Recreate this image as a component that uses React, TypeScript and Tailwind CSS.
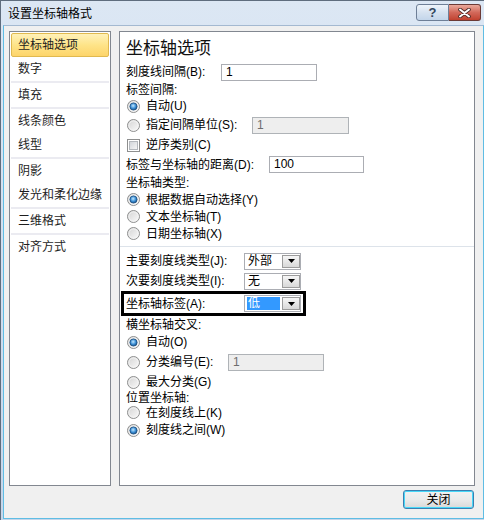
import React from "react";

function Radio({ on }: { on?: boolean }) {
  return (
    <svg width="13" height="13" viewBox="0 0 13 13" className="shrink-0">
      <defs>
        <linearGradient id="rOff" x1="0" y1="0" x2="1" y2="1">
          <stop offset="0" stopColor="#d2d2d2" />
          <stop offset="1" stopColor="#fcfcfc" />
        </linearGradient>
        <radialGradient id="rOn" cx="0.45" cy="0.4" r="0.65">
          <stop offset="0" stopColor="#c2e8ff" />
          <stop offset="0.55" stopColor="#3b8fd6" />
          <stop offset="1" stopColor="#14477a" />
        </radialGradient>
      </defs>
      <circle cx="6.5" cy="6.5" r="6" fill="url(#rOff)" stroke="#8e8f8f" />
      <circle cx="6.5" cy="6.5" r="4.6" fill="none" stroke="#f5f5f5" strokeWidth="0.8" />
      {on && <circle cx="6.5" cy="6.5" r="3.6" fill="url(#rOn)" stroke="#1a4e80" strokeWidth="0.8" />}
    </svg>
  );
}

function Check() {
  return (
    <svg width="13" height="13" viewBox="0 0 13 13" className="shrink-0">
      <defs>
        <linearGradient id="cb" x1="0" y1="0" x2="1" y2="1">
          <stop offset="0" stopColor="#cfd3d8" />
          <stop offset="1" stopColor="#f7f7f7" />
        </linearGradient>
      </defs>
      <rect x="0.5" y="0.5" width="12" height="12" fill="#fff" stroke="#8e8f8f" />
      <rect x="2.5" y="2.5" width="8" height="8" fill="url(#cb)" stroke="#b4b8bd" />
    </svg>
  );
}

function Select({ value, hl }: { value: string; hl?: boolean }) {
  return (
    <div className="flex h-[17px] w-[57px] shrink-0 border border-[#abadb3] bg-white">
      <div className="flex flex-1 items-center pl-[2px]">
        {hl ? (
          <span className="flex h-[13px] w-[33px] items-center bg-[#3399ff] pl-[1px] leading-[13px] text-white">{value}</span>
        ) : (
          <span className="pl-[1px] leading-[13px]">{value}</span>
        )}
      </div>
      <div className="my-[1px] flex w-[18px] items-center justify-center border border-[#9c9c9c] bg-gradient-to-b from-[#f6f6f6] to-[#d8d8d8]">
        <svg width="7" height="4" viewBox="0 0 7 4">
          <path d="M0 0h7L3.5 4z" fill="#000" />
        </svg>
      </div>
    </div>
  );
}

function TextBox({ value, w, disabled }: { value: string; w: string; disabled?: boolean }) {
  return (
    <div
      className={
        "flex h-[17px] shrink-0 items-center border pl-[4px] leading-[13px] " +
        w +
        (disabled ? " border-[#afb3b7] bg-[#eeeeee] text-[#6d6d6d]" : " border-[#abadb3] bg-white text-black")
      }
    >
      {value}
    </div>
  );
}

const groups = [
  ["坐标轴选项", "数字"],
  ["填充"],
  ["线条颜色", "线型"],
  ["阴影", "发光和柔化边缘"],
  ["三维格式"],
  ["对齐方式"],
];

export default function App() {
  return (
    <div className="flex h-[520px] w-[484px] flex-col border-l border-t border-[#5f6d7e] bg-gradient-to-b from-[#dce7f4] to-[#c6d6ea] font-['Liberation_Sans','Noto_Sans_CJK_SC',sans-serif] text-[12px] text-black">
      {/* title bar */}
      <div className="flex h-[24px] shrink-0 items-start">
        <div className="pl-[7px] pt-[4px] leading-[18px]">设置坐标轴格式</div>
        <div className="ml-auto flex pr-[3px] pt-[3px]">
          <div className="flex h-[17px] w-[33px] items-center justify-center rounded-l-[3px] border border-[#6e7f97] bg-gradient-to-b from-[#eef4fb] via-[#d6e2f0] to-[#c3d5ea] text-[13px] font-bold leading-none text-[#34475f]">
            ?
          </div>
          <div className="flex h-[17px] w-[32px] items-center justify-center rounded-r-[3px] border border-l-0 border-[#6b3a36] bg-gradient-to-b from-[#e9a99c] via-[#d2685a] to-[#c1412f]">
            <svg width="13" height="10" viewBox="0 0 13 10">
              <path d="M2 1.5l9 7M11 1.5l-9 7" stroke="#4a2a27" strokeWidth="3.6" strokeLinecap="round" />
              <path d="M2 1.5l9 7M11 1.5l-9 7" stroke="#fff" strokeWidth="2" strokeLinecap="round" />
            </svg>
          </div>
        </div>
      </div>

      {/* client */}
      <div className="mb-[1px] ml-[2px] flex flex-1 flex-col border border-[#5fbde4] border-t-[#a4b9d1] bg-[#f0f0f0]">
        <div className="flex h-[460px] gap-[8px] pl-[5px] pr-[8px] pt-[5px]">
          {/* category list */}
          <div className="flex w-[102px] shrink-0 flex-col border border-[#828790] bg-white px-[1px] pt-[1px]">
            {groups.map((g, gi) => (
              <div key={gi} className="flex flex-col">
                {gi > 0 && <div className="h-[2px] bg-[#ebebf1]" />}
                {g.map((t) =>
                  t === "坐标轴选项" ? (
                    <div
                      key={t}
                      className="flex h-[24px] items-center rounded-[2px] border border-[#e0b94f] bg-gradient-to-b from-[#fff1b8] via-[#fee488] to-[#fdd46a] pl-[6px] leading-[14px] text-[#1e1e1e]"
                    >
                      {t}
                    </div>
                  ) : (
                    <div key={t} className="flex h-[24px] items-center pl-[7px] leading-[14px] text-[#1e1e1e]">
                      {t}
                    </div>
                  )
                )}
              </div>
            ))}
          </div>

          {/* options panel */}
          <div className="flex w-[356px] shrink-0 flex-col border border-[#828790] bg-white pt-[4px] leading-[14px]">
            <div className="flex h-[26px] items-center pl-[6px] text-[17px] leading-[20px] text-[#111]">坐标轴选项</div>

            <div className="flex h-[20px] items-center pl-[6px]">
              <span className="w-[95px] shrink-0">刻度线间隔(B):</span>
              <TextBox value="1" w="w-[96px]" />
            </div>
            <div className="flex h-[16px] items-center pl-[6px]">标签间隔:</div>
            <div className="flex h-[16px] items-center pl-[7px]">
              <Radio on />
              <span className="ml-[6px]">自动(U)</span>
            </div>
            <div className="flex h-[22px] items-center pl-[7px]">
              <div className="flex w-[125px] shrink-0 items-center">
                <Radio />
                <span className="ml-[6px]">指定间隔单位(S):</span>
              </div>
              <TextBox value="1" w="w-[97px]" disabled />
            </div>
            <div className="flex h-[18px] items-center pl-[7px]">
              <Check />
              <span className="ml-[6px]">逆序类别(C)</span>
            </div>
            <div className="flex h-[21px] items-center pl-[6px]">
              <span className="w-[143px] shrink-0">标签与坐标轴的距离(D):</span>
              <TextBox value="100" w="w-[95px]" />
            </div>
            <div className="flex h-[16px] items-center pl-[6px]">坐标轴类型:</div>
            <div className="flex h-[17px] items-center pl-[7px]">
              <Radio on />
              <span className="ml-[6px]">根据数据自动选择(Y)</span>
            </div>
            <div className="flex h-[17px] items-center pl-[7px]">
              <Radio />
              <span className="ml-[6px]">文本坐标轴(T)</span>
            </div>
            <div className="flex h-[17px] items-center pl-[7px]">
              <Radio />
              <span className="ml-[6px]">日期坐标轴(X)</span>
            </div>

            <div className="flex h-[9px] items-center">
              <div className="h-px w-full bg-[#dde3ea]" />
            </div>

            <div className="flex h-[20px] items-center pl-[6px]">
              <span className="w-[118px] shrink-0">主要刻度线类型(J):</span>
              <Select value="外部" />
            </div>
            <div className="flex h-[20px] items-center pl-[6px]">
              <span className="w-[118px] shrink-0">次要刻度线类型(I):</span>
              <Select value="无" />
            </div>
            <div className="ml-[1px] flex h-[25px] w-[185px] items-center border-[3px] border-black pl-[2px]">
              <span className="w-[118px] shrink-0">坐标轴标签(A):</span>
              <Select value="低" hl />
            </div>

            <div className="flex h-[18px] items-center pl-[6px]">横坐标轴交叉:</div>
            <div className="flex h-[16px] items-center pl-[7px]">
              <Radio on />
              <span className="ml-[6px]">自动(O)</span>
            </div>
            <div className="flex h-[24px] items-center pl-[7px]">
              <div className="flex w-[101px] shrink-0 items-center">
                <Radio />
                <span className="ml-[6px]">分类编号(E):</span>
              </div>
              <TextBox value="1" w="w-[96px]" disabled />
            </div>
            <div className="flex h-[16px] items-center pl-[7px]">
              <Radio />
              <span className="ml-[6px]">最大分类(G)</span>
            </div>
            <div className="flex h-[15px] items-center pl-[6px]">位置坐标轴:</div>
            <div className="flex h-[15px] items-center pl-[7px]">
              <Radio />
              <span className="ml-[6px]">在刻度线上(K)</span>
            </div>
            <div className="flex h-[20px] items-center pl-[7px]">
              <Radio on />
              <span className="ml-[6px]">刻度线之间(W)</span>
            </div>
          </div>
        </div>

        {/* footer */}
        <div className="flex flex-1 justify-end pr-[9px] pt-[4px]">
          <div className="flex h-[19px] w-[71px] items-center justify-center rounded-[3px] border border-[#3c7fb1] bg-gradient-to-b from-[#f2f2f2] via-[#ebebeb] to-[#d9d9d9] leading-[14px] shadow-[inset_0_0_0_1px_#48d8f8]">
            关闭
          </div>
        </div>
      </div>
    </div>
  );
}
